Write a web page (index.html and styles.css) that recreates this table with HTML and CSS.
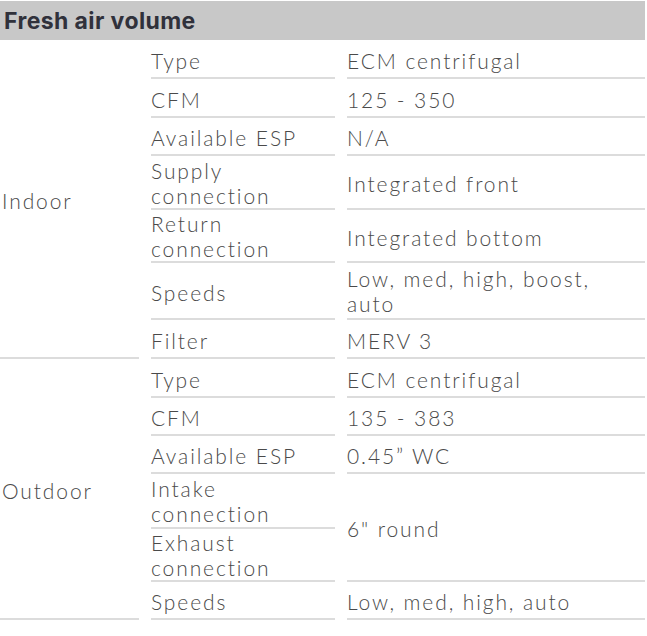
FILE: index.html
```html
<!DOCTYPE html>
<html>
<head>
<meta charset="utf-8">
<link rel="stylesheet" href="styles.css">
</head>
<body>
<div class="spec">
  <div class="head">Fresh air volume</div>
  <table class="grid">
    <colgroup><col class="c1"><col class="c2"><col class="c3"></colgroup>
    <tbody>
      <tr class="h39"><td class="group" rowspan="7">Indoor</td><td class="k">Type</td><td class="v">ECM centrifugal</td></tr>
      <tr class="h39"><td class="k">CFM</td><td class="v">125 - 350</td></tr>
      <tr class="h38"><td class="k">Available ESP</td><td class="v">N/A</td></tr>
      <tr class="h54"><td class="k two">Supply<br>connection</td><td class="v">Integrated front</td></tr>
      <tr class="h53"><td class="k two">Return<br>connection</td><td class="v">Integrated bottom</td></tr>
      <tr class="h57"><td class="k">Speeds</td><td class="v two">Low, med, high, boost,<br>auto</td></tr>
      <tr class="h39"><td class="k">Filter</td><td class="v">MERV 3</td></tr>
      <tr class="h39"><td class="group" rowspan="6">Outdoor</td><td class="k">Type</td><td class="v">ECM centrifugal</td></tr>
      <tr class="h38"><td class="k">CFM</td><td class="v">135 - 383</td></tr>
      <tr class="h38"><td class="k">Available ESP</td><td class="v">0.45” WC</td></tr>
      <tr class="h55"><td class="k two">Intake<br>connection</td><td class="v" rowspan="2">6" round</td></tr>
      <tr class="h53"><td class="k two">Exhaust<br>connection</td></tr>
      <tr class="h38"><td class="k">Speeds</td><td class="v">Low, med, high, auto</td></tr>
    </tbody>
  </table>
</div>
</body>
</html>
```

FILE: styles.css
```css
html, body {
  margin: 0;
  padding: 0;
  background: #ffffff;
}

.spec {
  width: 645px;
  padding-top: 1px;
  font-family: "Lato", "Open Sans", "Liberation Sans", sans-serif;
  color: #4a4a4a;
  overflow: hidden;
}

.head {
  background: #c8c8c8;
  height: 39px;
  line-height: 41px;
  padding-left: 4px;
  font-family: "Inter", "Open Sans", sans-serif;
  font-size: 23px;
  font-weight: 700;
  color: #30313b;
  letter-spacing: 0.4px;
}

.grid {
  border-collapse: separate;
  border-spacing: 12px 0;
  margin: 0 -12px;
  width: 669px;
  table-layout: fixed;
}

.c1 { width: 139px; }
.c2 { width: 184px; }
.c3 { width: 298px; }

.grid td {
  padding: 3px 0 0 0;
  font-size: 21px;
  font-weight: 300;
  line-height: 25px;
  vertical-align: middle;
  border-bottom: 2px solid #dcdcdc;
  white-space: nowrap;
  letter-spacing: 1.9px;
}

.grid td.two {
  padding-top: 1px;
}

.grid td.group {
  padding-left: 2px;
}

.h38 { height: 38px; }
.h39 { height: 39px; }
.h53 { height: 53px; }
.h54 { height: 54px; }
.h55 { height: 55px; }
.h57 { height: 57px; }
```
